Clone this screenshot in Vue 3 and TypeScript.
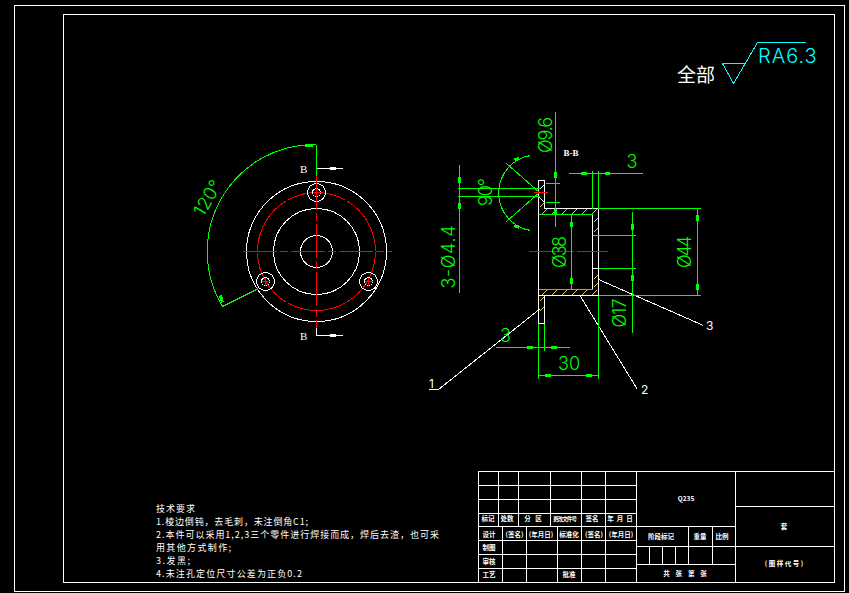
<script setup lang="ts">
interface Label { t: string; x: number; y: number; len?: number; tiny?: boolean }
interface Rotated { t: string; x: number; y: number; r: number; len?: number }

const white = [
  'M14 5H844V591H14Z', 'M63 14H834V582H63Z',
  // title block
  'M478 471H834V582H478Z',
  'M478 485H636M478 499H636M478 513H636M478 526H735M478 540H636M478 554H636M478 568H636',
  'M498 471V526M518 471V526M550 471V526M581 471V582M605 471V582M636 471V582',
  'M502 526V582M526 526V582M557 526V582',
  'M735 471V582M735 506H834M636 546H834M636 564H735',
  'M688 526V564M712 526V564M649 546V564M662 546V564M675 546V564',
  // section view
  'M538 180H544V208H598V295H544V323H538ZM538 214V289M592 214V289H544M592 235H598M592 268H598',
  'M544 184L539 189M539 197L544 202M538 295H544',
  // section markers
  'M316 168H342M316 327V335H342',
  // leaders
  'M540 308L438 389H428M598 279L703 325M580 296L637 389',
]
const whiteThick = ['M329 168H335M329 335H335']

const green = [
  'M316 144V175', 'M316 144A107 107 0 0 0 222 306L258 288',
  'M538 214H592M538 289H592',
  'M457 188H539M457 196H539M459 164V292',
  'M530 155A38 38 0 0 0 530 230M506 163L539 192L506 221',
  'M545 183H559M545 202H559M555 111V226',
  'M568 173H642M592 170V208M598 170V208',
  'M571 214V289',
  'M598 208H700M598 295H700M697 208V295',
  'M592 235H635M598 268H635M632 211V332',
  'M598 295V378M538 323V378M538 375H598',
  'M495 347H569M544 323V350',
]
const arrows = [
  'M304 145H312M220 295L222 302',
  'M459 176V182M459 202V208',
  'M514 159L519 158M514 225L519 227',
  'M555 171V177M555 208V213',
  'M580 173H586M604 173H609',
  'M571 221V226M571 277V283',
  'M697 214V220M697 283V289',
  'M632 223V229M632 274V280',
  'M526 347H532M550 347H556',
  'M544 375H550M585 375H591',
]
const hatch = [
  'M541 214L546 209M551 214L556 209M561 214L566 209M571 214L576 209M581 214L586 209M591 214L596 209',
  'M593 222L597 218M593 232L597 228M593 279L597 275M593 287L597 283',
  'M541 295L546 290M551 295L556 290M561 295L566 290M571 295L576 290M581 295L586 290M591 295L596 290',
  'M539 207L543 203M539 301L543 297M539 311L543 307',
]

const center = ['M242 251H391', 'M528 251H607', 'M316 175V327', 'M533 192H547']
const holes: [number, number][] = [[316, 192], [265, 281], [368, 281]]

const greenText: Rotated[] = [
  { t: '120°', x: 213, y: 201, r: -60, len: 38 },
  { t: '3-Ø4.4', x: 455, y: 257, r: -90, len: 63 },
  { t: '90°', x: 492, y: 192, r: -90, len: 28 },
  { t: 'Ø9.6', x: 552, y: 135, r: -90, len: 36 },
  { t: 'Ø38', x: 566, y: 252, r: -90, len: 32 },
  { t: 'Ø44', x: 691, y: 252, r: -90, len: 32 },
  { t: 'Ø17', x: 626, y: 313, r: -90, len: 29 },
  { t: '3', x: 632, y: 168, r: 0 },
  { t: '3', x: 505.5, y: 342, r: 0 },
  { t: '30', x: 569, y: 370, r: 0, len: 22 },
]

const tech: Label[] = [
  { t: '技术要求', x: 156, y: 512, len: 39 },
  { t: '1.棱边倒钝，去毛刺，未注倒角C1;', x: 156, y: 525, len: 152 },
  { t: '2.本件可以采用1,2,3三个零件进行焊接而成，焊后去渣，也可采', x: 156, y: 538, len: 283 },
  { t: '用其他方式制作;', x: 156, y: 551, len: 75 },
  { t: '3.发黑;', x: 156, y: 564, len: 34 },
  { t: '4.未注孔定位尺寸公差为正负0.2', x: 156, y: 577, len: 146 },
]

const title: Label[] = [
  { t: '标记', x: 488, y: 521 }, { t: '处数', x: 507, y: 521 }, { t: '分   区', x: 533, y: 521 },
  { t: '更改文件号', x: 565, y: 521, len: 24, tiny: true }, { t: '签名', x: 592, y: 521 }, { t: '年  月  日', x: 620, y: 521 },
  { t: '设计', x: 489, y: 537 }, { t: '(签名)', x: 514.5, y: 537 }, { t: '(年月日)', x: 541, y: 537 },
  { t: '标准化', x: 569, y: 537 }, { t: '(签名)', x: 594, y: 537 }, { t: '(年月日)', x: 621, y: 537 },
  { t: '制图', x: 489, y: 550 }, { t: '审核', x: 489, y: 564 }, { t: '工艺', x: 489, y: 577 }, { t: '批准', x: 569, y: 577 },
  { t: '阶段标记', x: 661, y: 539 }, { t: '重量', x: 700, y: 539 }, { t: '比例', x: 722, y: 539 },
  { t: '共    张    第    张', x: 685, y: 576 },
  { t: '( 图 样 代 号 )', x: 784, y: 566 }, { t: '套', x: 784, y: 529 }, { t: 'Q235', x: 686, y: 501 },
]
</script>

<template>
  <div class="sheet">
    <svg class="drawing" viewBox="0 0 849 593" width="849" height="593" xmlns="http://www.w3.org/2000/svg">
      <g transform="translate(.5 .5)" fill="none" shape-rendering="crispEdges">
        <path v-for="d in hatch" :key="d" :d="d" class="hatch" />
        <path v-for="d in white" :key="d" :d="d" class="white" />
        <path v-for="d in whiteThick" :key="d" :d="d" class="white thick" />

        <circle cx="316" cy="251" r="70" class="white" />
        <circle cx="316" cy="251" r="43" class="white" />
        <circle cx="316" cy="251" r="16" class="white" />
        <circle cx="316" cy="251" r="59" class="red dashed-ring" />
        <g v-for="h in holes" :key="h[0]">
          <circle :cx="h[0]" :cy="h[1]" r="9" class="white" />
          <circle :cx="h[0]" :cy="h[1]" r="4" class="white" />
          <path :d="`M${h[0] - 4} ${h[1]}H${h[0] + 4}M${h[0]} ${h[1] - 4}V${h[1] + 4}`" class="red" />
        </g>
        <path v-for="d in center" :key="d" :d="d" class="red dashed" />

        <path v-for="d in green" :key="d" :d="d" class="green" />
        <path v-for="d in arrows" :key="d" :d="d" class="green thick" />
        <path d="M722 63H745M722 63L733 83L757 42H805" class="cyan" />
      </g>

      <text
        v-for="g in greenText"
        :key="g.t + g.x"
        :transform="`rotate(${g.r} ${g.x} ${g.y})`"
        :x="g.x"
        :y="g.y"
        :textLength="g.len"
        class="cad"
      >{{ g.t }}</text>

      <text x="758" y="63" class="ra">RA6.3</text>
      <text x="677" y="82" class="all">全部</text>

      <text x="300" y="173" class="mark">B</text>
      <text x="300" y="340" class="mark">B</text>
      <text x="571" y="156" class="mark small">B-B</text>
      <text x="429" y="388" class="num">1</text>
      <text x="641" y="394" class="num">2</text>
      <text x="706" y="330" class="num">3</text>

      <text v-for="l in tech" :key="l.t" :x="l.x" :y="l.y" :textLength="l.len" class="tech">{{ l.t }}</text>
      <text
        v-for="l in title"
        :key="l.t + l.x + l.y"
        :x="l.x"
        :y="l.y"
        :textLength="l.len"
        :class="['cell', { tiny: l.tiny }]"
      >{{ l.t }}</text>
    </svg>
  </div>
</template>

<style scoped>
.sheet { width: 849px; height: 593px; background: #000; overflow: hidden; }
.drawing { display: block; }
.white { stroke: #fff; stroke-width: 1; }
.green { stroke: #0f0; stroke-width: 1; }
.red { stroke: #f00; stroke-width: 1; }
.cyan { stroke: #0ff; stroke-width: 1; }
.hatch { stroke: #e8c84a; stroke-width: 1; }
.thick { stroke-width: 3; }
.dashed { stroke-dasharray: 34 3 8 3; }
.dashed-ring { stroke-dasharray: 60 2; }
.cad {
  fill: #0f0;
  font-family: "Inter", "DejaVu Sans", sans-serif;
  font-weight: 300;
  font-size: 18px;
  text-anchor: middle;
}
.ra {
  fill: #0ff;
  font-family: "Inter", "DejaVu Sans", sans-serif;
  font-weight: 300;
  font-size: 20px;
  letter-spacing: 1px;
}
.all {
  fill: #fff;
  font-family: "Noto Sans CJK SC", sans-serif;
  font-size: 19px;
}
.mark {
  fill: #fff;
  font-family: "Liberation Serif", serif;
  font-size: 11px;
}
.mark.small { font-size: 9px; font-weight: 700; text-anchor: middle; }
.num {
  fill: #fff;
  font-family: "Inter", "DejaVu Sans", sans-serif;
  font-size: 12px;
}
.tech {
  fill: #fff;
  font-family: "Noto Sans CJK SC", sans-serif;
  font-size: 9px;
}
.cell {
  fill: #fff;
  font-family: "Noto Sans CJK SC", sans-serif;
  font-size: 6.5px;
  font-weight: 700;
  text-anchor: middle;
  white-space: pre;
}
.cell.tiny { font-size: 5.5px; }
</style>

<style>
html, body { background: #000; }
</style>
